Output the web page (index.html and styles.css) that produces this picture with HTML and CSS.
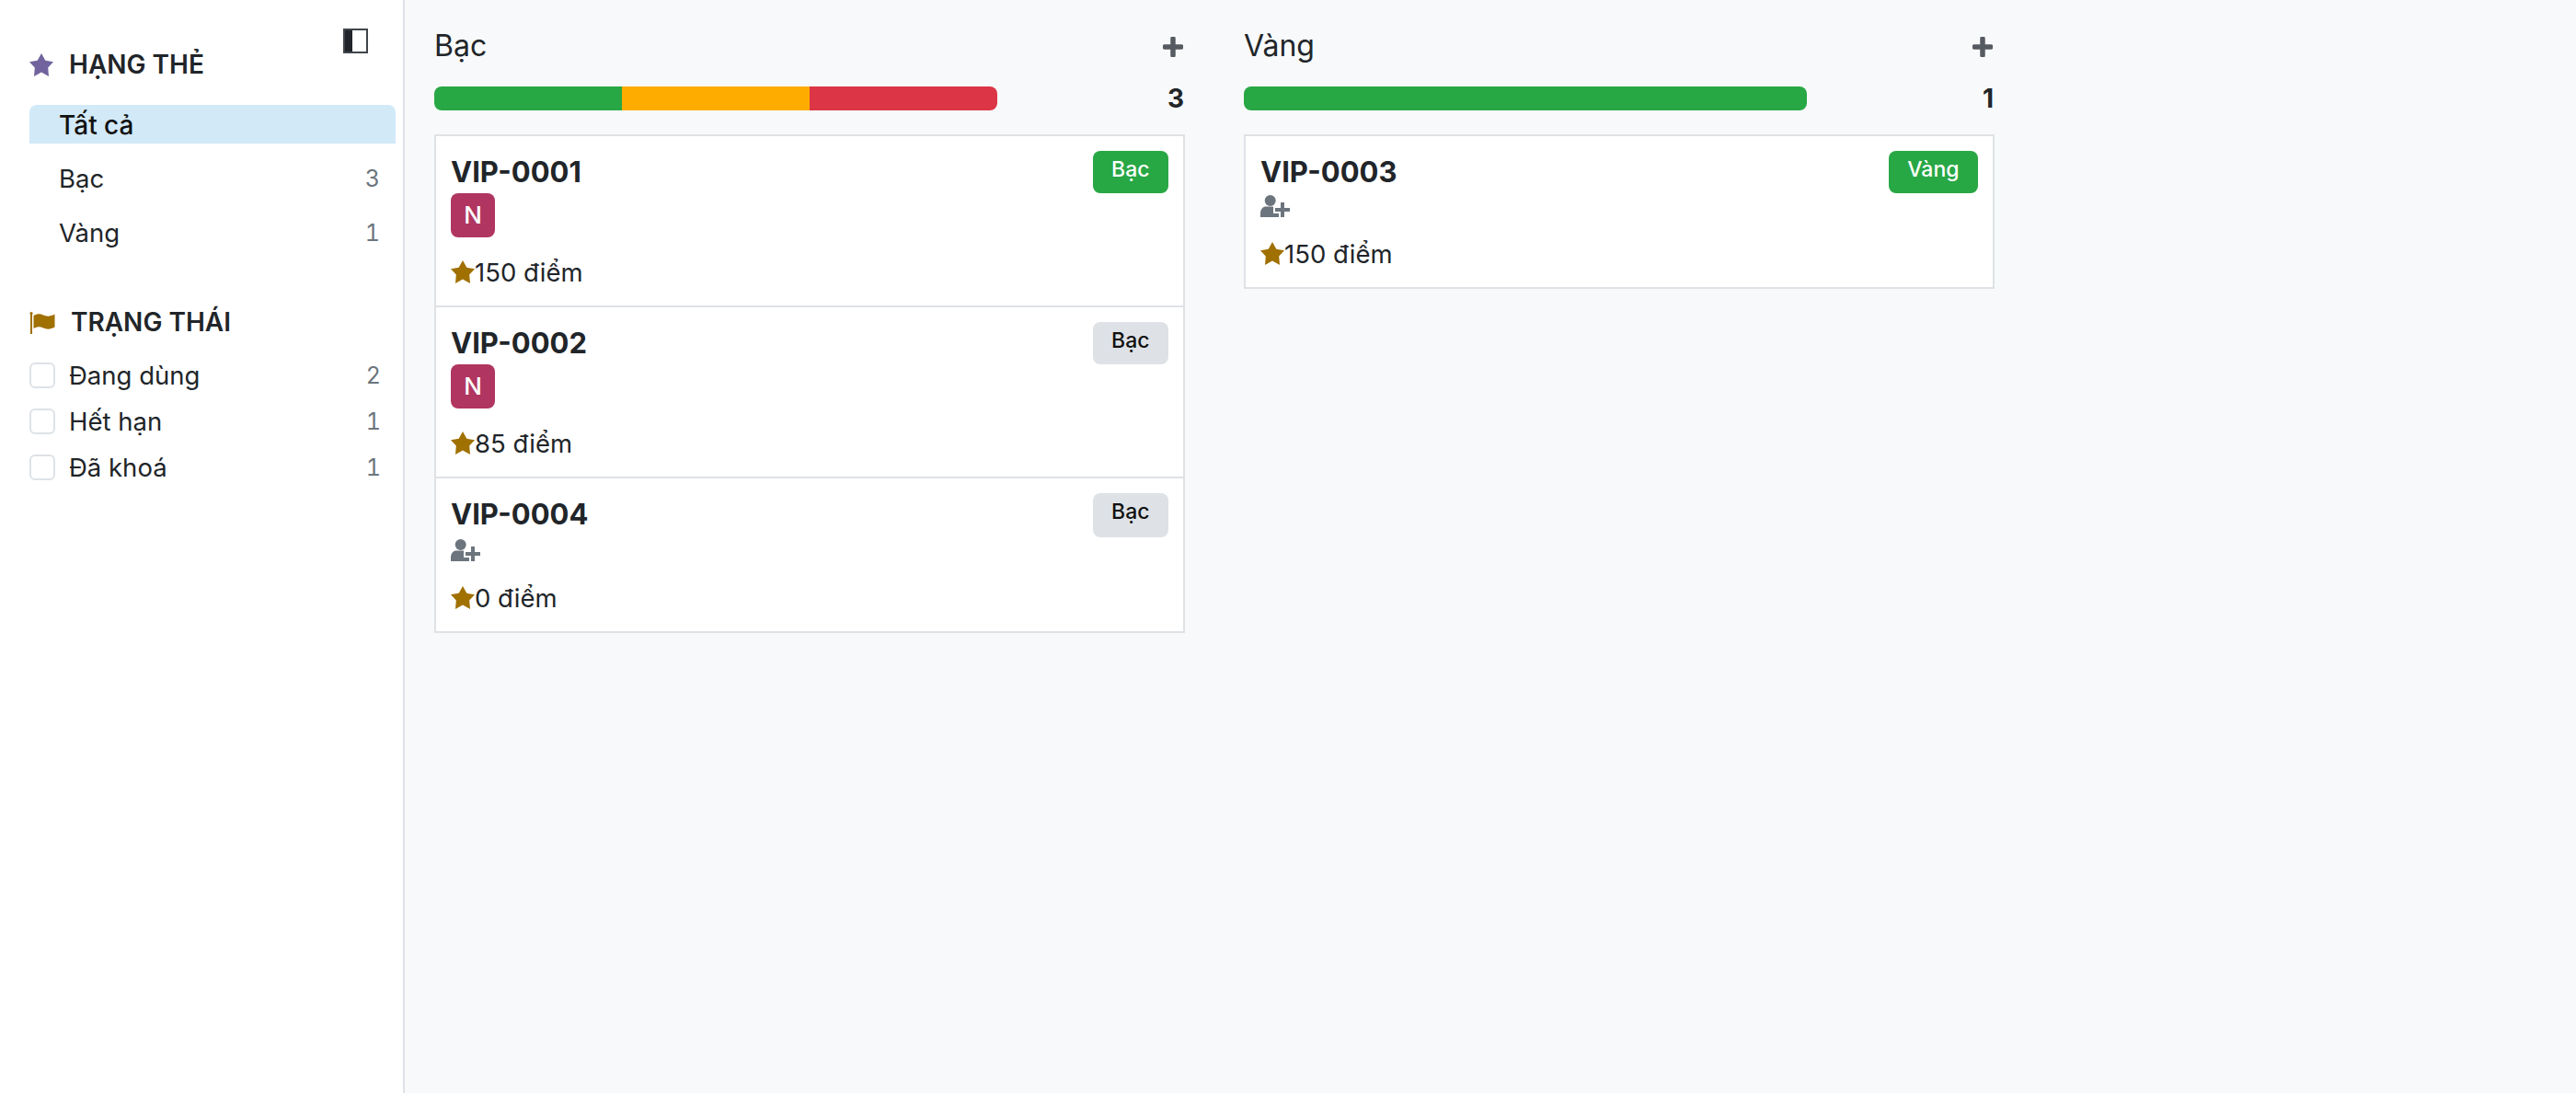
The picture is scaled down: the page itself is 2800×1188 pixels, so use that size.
FILE: index.html
```html
<!DOCTYPE html>
<html lang="vi">
<head>
<meta charset="utf-8">
<title>Thẻ thành viên</title>
<link rel="stylesheet" href="styles.css">
</head>
<body>
<svg class="defs" width="0" height="0" aria-hidden="true">
  <symbol id="star" viewBox="0 0 26 25"><path d="M13 0 L17.300 7.800 L26 9.300 L20.200 15.500 L21 25 L13 20.600 L5 25 L5.800 15.500 L0 9.300 L8.700 7.800 Z"/></symbol>
  <symbol id="assign" viewBox="0 0 32 24"><circle cx="10.700" cy="6" r="6"/><path d="M0 24 V20 C0 15 3 12.500 6 12.500 H15 C18 12.500 21 15 21 20 V24 Z"/><path d="M24 6 V24 M14 16 H32" fill="none" stroke="#fff" stroke-width="8"/><path d="M24 8 V24 M16 16 H32" fill="none" stroke="#6c757d" stroke-width="4"/></symbol>
</svg>
<div class="app">
  <aside class="panel">
    <div class="panel-top">
      <h2 class="panel-title first">
        <svg class="ico-star-purple"><use href="#star"/></svg>
        <span>HẠNG THẺ</span>
      </h2>
      <button class="toggle" aria-label="Thu gọn"><span class="toggle-fill"></span></button>
    </div>
    <ul class="cats">
      <li class="cat active"><span>Tất cả</span></li>
      <li class="cat"><span>Bạc</span><span class="num">3</span></li>
      <li class="cat"><span>Vàng</span><span class="num">1</span></li>
    </ul>
    <h2 class="panel-title second">
      <svg class="ico-flag" viewBox="0 0 28 24"><rect x="1" y="1" width="2" height="23"/><circle cx="2" cy="1.600" r="1.600"/><path d="M4.500 4 C9 1.500 12 2 15 3.500 C19 5.300 23 5 27.500 2.500 V16.500 C23 19 19 19.300 15 17.500 C12 16 9 15.500 4.500 18 Z"/></svg>
      <span>TRẠNG THÁI</span>
    </h2>
    <ul class="checks">
      <li class="check"><span class="box"></span><span class="lbl">Đang dùng</span><span class="num">2</span></li>
      <li class="check"><span class="box"></span><span class="lbl">Hết hạn</span><span class="num">1</span></li>
      <li class="check"><span class="box"></span><span class="lbl">Đã khoá</span><span class="num">1</span></li>
    </ul>
  </aside>
  <main class="board">
    <section class="col">
      <header class="col-head"><span class="col-name">Bạc</span><svg class="plus" viewBox="0 0 22 22"><path d="M11 2 V20 M2 11 H20"/></svg></header>
      <div class="col-prog">
        <div class="bar"><i class="seg green"></i><i class="seg orange"></i><i class="seg red"></i></div>
        <b class="col-count">3</b>
      </div>
      <div class="cards">
        <article class="card">
          <div class="card-top"><strong class="code">VIP-0001</strong><span class="tag green">Bạc</span></div>
          <div class="avatar">N</div>
          <div class="points"><svg class="ico-star"><use href="#star"/></svg>150 điểm</div>
        </article>
        <article class="card">
          <div class="card-top"><strong class="code">VIP-0002</strong><span class="tag grey">Bạc</span></div>
          <div class="avatar">N</div>
          <div class="points"><svg class="ico-star"><use href="#star"/></svg>85 điểm</div>
        </article>
        <article class="card">
          <div class="card-top tall"><strong class="code">VIP-0004</strong><span class="tag grey">Bạc</span></div>
          <div class="assign"><svg class="ico-assign"><use href="#assign"/></svg></div>
          <div class="points"><svg class="ico-star"><use href="#star"/></svg>0 điểm</div>
        </article>
      </div>
    </section>
    <section class="col">
      <header class="col-head"><span class="col-name">Vàng</span><svg class="plus" viewBox="0 0 22 22"><path d="M11 2 V20 M2 11 H20"/></svg></header>
      <div class="col-prog">
        <div class="bar"><i class="seg green full"></i></div>
        <b class="col-count">1</b>
      </div>
      <div class="cards">
        <article class="card">
          <div class="card-top"><strong class="code">VIP-0003</strong><span class="tag green">Vàng</span></div>
          <div class="assign"><svg class="ico-assign"><use href="#assign"/></svg></div>
          <div class="points"><svg class="ico-star"><use href="#star"/></svg>150 điểm</div>
        </article>
      </div>
    </section>
  </main>
</div>
</body>
</html>
```
FILE: styles.css
```css
* { box-sizing: border-box; }
html, body { margin: 0; padding: 0; height: 100%; }
body {
  font-family: Inter, "Noto Sans", "Liberation Sans", sans-serif;
  font-size: 27.500px;
  line-height: 39px;
  color: #212529;
  background: #fff;
  overflow: hidden;
}
.defs { position: absolute; }
ul { list-style: none; margin: 0; padding: 0; }
h2 { margin: 0; }
.app { display: flex; height: 100vh; }

/* search panel */
.panel {
  flex: 0 0 440px;
  border-right: 2px solid #dee2e6;
  padding: 31px 8px 0 32px;
  background: #fff;
}
.panel-top { display: flex; justify-content: space-between; align-items: flex-start; height: 83px; padding-right: 30px; }
.panel-title { display: flex; align-items: center; font-size: 28px; font-weight: 600; line-height: 39px; }
.panel-title.first { margin-top: 20px; gap: 17px; }
.panel-title.second { margin-top: 58px; gap: 17px; height: 39px; }
.ico-star-purple { width: 26px; height: 25px; fill: #71639e; }
.ico-flag { width: 28px; height: 24px; fill: #a07000; }
.toggle { width: 27px; height: 27px; padding: 0; border: 2px solid #3f454b; background: #fff; display: block; }
.toggle-fill { display: block; width: 8px; height: 100%; background: #212529; }
.cats { display: flex; flex-direction: column; gap: 16.500px; }
.cat { display: flex; justify-content: space-between; align-items: center; height: 42px; padding: 2px 17px 0 32px; }
.cat.active { background: #d2e9f8; border-radius: 8px 8px 0 0; color: #111; font-weight: 500; font-size: 28px; }
.num { color: #6c757d; font-size: 25px; font-variant-numeric: tabular-nums; }
.checks { display: flex; flex-direction: column; gap: 8px; margin-top: 17px; padding-right: 16px; }
.check { display: flex; align-items: center; height: 42px; }
.box { width: 28px; height: 28px; border: 2px solid #dee2e6; border-radius: 6px; background: #fff; margin-right: 15px; }
.lbl { flex: 1; }

/* kanban */
.board { flex: 1; display: flex; align-items: flex-start; gap: 64px; padding: 28px 32px 0; background: #f8f9fa; }
.col { flex: 0 0 816px; }
.col-head { display: flex; justify-content: space-between; align-items: center; height: 44px; }
.col-name { font-size: 32px; line-height: 46px; }
.plus { width: 22px; height: 22px; margin: 1px 2px 0 0; fill: none; stroke: #555b61; stroke-width: 5.500; stroke-linecap: round; }
.col-prog { display: flex; justify-content: space-between; align-items: center; height: 26px; margin-top: 22px; }
.bar { display: flex; width: 612px; height: 26px; border-radius: 8px; overflow: hidden; }
.seg { flex: 1; display: block; }
.seg.green { background: #28a745; }
.seg.orange { background: #ffac00; }
.seg.red { background: #dc3545; }
.col-count { font-size: 28px; font-weight: 700; line-height: 34px; margin-right: 1px; }
.cards { margin-top: 26px; border: 2px solid #dee2e6; background: #fff; }
.card { padding: 16px; }
.card + .card { border-top: 2px solid #dee2e6; }
.card-top { display: flex; justify-content: space-between; align-items: flex-start; height: 46px; }
.card-top.tall { height: 48px; }
.card-top.tall .tag { height: 48px; line-height: 41px; }
.code { font-size: 31px; font-weight: 700; line-height: 46px; }
.tag { height: 46px; padding: 0 20.500px; border-radius: 8px; font-size: 23px; font-weight: 500; line-height: 40px; }
.tag.green { background: #28a745; color: #fff; }
.tag.grey { background: #dee2e6; color: #111; }
.avatar { width: 48px; height: 48px; border-radius: 8px; background: #b03560; color: #fff; font-size: 26px; font-weight: 500; line-height: 48px; text-align: center; }
.assign { height: 28px; padding-top: 2px; }
.ico-assign { width: 32px; height: 24px; fill: #6c757d; display: block; }
.points { display: flex; align-items: center; height: 40px; margin-top: 18px; }
.ico-star { width: 26px; height: 25px; margin-bottom: 2px; fill: #a07000; }
```
